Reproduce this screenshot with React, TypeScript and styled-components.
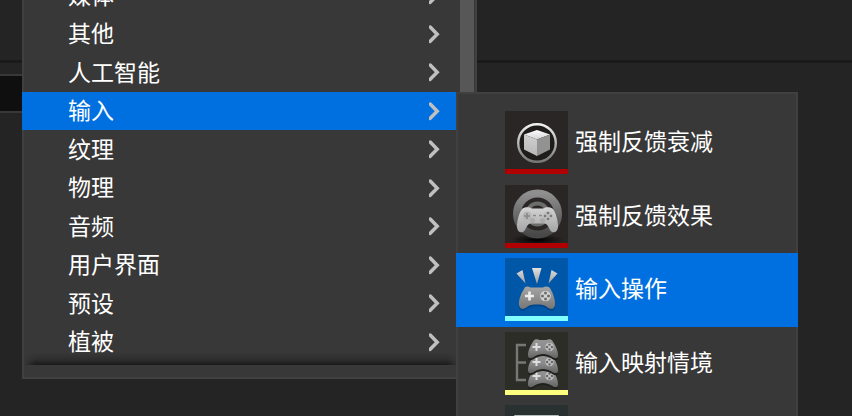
import React from "react";
import styled, { createGlobalStyle } from "styled-components";

const GlobalStyle = createGlobalStyle`
  * { box-sizing: border-box; }
  body { margin: 0; background: #242424; overflow: hidden; }
  button, input {
    font-family: "Noto Sans CJK SC", "Noto Sans", sans-serif;
    border: 0;
    padding: 0;
    margin: 0;
  }
`;

const Page = styled.main`
  position: relative;
  display: flex;
  flex-direction: column;
  align-items: flex-start;
  min-height: 100vh;
  overflow: hidden;
  background: #242424;
  color: #fff;
`;

const TopPane = styled.header`
  align-self: stretch;
  height: 63px;
  border-bottom: 3px solid #1a1a1a;
`;

const SearchBox = styled.input`
  width: 160px;
  height: 39px;
  margin-top: 11px;
  background: #0f0f0f;
  border: solid #383838;
  border-width: 2px 0;
  color: #c0c0c0;
`;

const Menu = styled.nav`
  position: absolute;
  top: -26px;
  left: 22px;
  width: 455px;
  background: #383838;
  border: 2px solid #404040;
`;

const MenuScroll = styled.div`
  display: flex;
  margin-left: -2px;
`;

const MenuList = styled.div`
  flex: 1;
  display: grid;
  grid-template-rows: repeat(10, 1fr);
  height: 385px;
  margin-bottom: 4px;
`;

const MenuRow = styled.button<{ $active?: boolean }>`
  display: flex;
  align-items: center;
  justify-content: space-between;
  padding: 0 17px 0 46px;
  background: ${(p) => (p.$active ? "#0070e0" : "transparent")};
  color: #fff;
  font-size: 23px;
  line-height: 34px;
  text-align: left;
`;

const MenuLabel = styled.span`
  padding-bottom: 3px;
`;

const ScrollTrack = styled.div`
  width: 17px;
  padding: 0 1px 0 2px;
`;

const ScrollThumb = styled.div`
  height: 240px;
  background: #575757;
`;

const MenuFooter = styled.div`
  position: relative;
  height: 12px;
  background: #383838;

  &::before {
    content: "";
    position: absolute;
    left: 0;
    right: 16px;
    bottom: 100%;
    height: 12px;
    background: linear-gradient(to bottom, rgba(26, 26, 26, 0), rgba(26, 26, 26, 0.35) 55%, #1a1a1a);
    mask-image: linear-gradient(to right, transparent, #000 12px, #000 calc(100% - 12px), transparent);
  }
`;

const Submenu = styled.nav`
  position: absolute;
  top: 92px;
  left: 456px;
  width: 342px;
  padding-top: 12px;
  background: #383838;
  border: 2px solid #404040;
`;

const AssetList = styled.div`
  display: grid;
  grid-template-rows: repeat(6, 1fr);
  height: 441px;
  margin: 0 -2px;
`;

const AssetRow = styled.button<{ $active?: boolean }>`
  display: flex;
  align-items: flex-start;
  gap: 7px;
  padding: 5px 0 0 49px;
  background: ${(p) => (p.$active ? "#0070e0" : "transparent")};
  color: #fff;
  font-size: 23px;
  line-height: 58px;
  text-align: left;
`;

const Thumb = styled.span<{ $fill: string; $bar: string }>`
  display: block;
  width: 63px;
  height: 63px;
  background: ${(p) => p.$fill};
  border-bottom: 5px solid ${(p) => p.$bar};

  svg { display: block; }
`;

const Chevron = () => (
  <svg width="12" height="20" viewBox="0 0 12 20" fill="none" aria-hidden="true">
    <path d="M1.2 3 L8.2 10.2 L1.2 17.4" stroke="#c0c0c0" strokeWidth="3.5" strokeLinecap="round" />
  </svg>
);

const Gradients = () => (
  <svg width="0" height="0" aria-hidden="true">
    <defs>
      <linearGradient id="pad" x1="0" y1="0" x2="0" y2="1">
        <stop offset="0" stopColor="#a5a5a5" />
        <stop offset="1" stopColor="#777" />
      </linearGradient>
      <linearGradient id="padDark" x1="0" y1="0" x2="0" y2="1">
        <stop offset="0" stopColor="#969696" />
        <stop offset="0.5" stopColor="#8a8a8a" />
        <stop offset="1" stopColor="#626262" />
      </linearGradient>
      <linearGradient id="ring" x1="0" y1="0" x2="0" y2="1">
        <stop offset="0" stopColor="#f2f2f2" />
        <stop offset="1" stopColor="#777" />
      </linearGradient>
      <linearGradient id="wheel" x1="0" y1="0" x2="0" y2="1">
        <stop offset="0" stopColor="#8f8f8f" />
        <stop offset="1" stopColor="#484848" />
      </linearGradient>
      <linearGradient id="whitePad" x1="0" y1="0" x2="0" y2="1">
        <stop offset="0" stopColor="#d4d4d4" />
        <stop offset="1" stopColor="#a4a4a4" />
      </linearGradient>
      <linearGradient id="ray" x1="0" y1="0" x2="0" y2="1">
        <stop offset="0" stopColor="#e2e2e2" />
        <stop offset="1" stopColor="#9d9d9d" />
      </linearGradient>
      <linearGradient id="cubeTop" x1="0" y1="0" x2="0" y2="1">
        <stop offset="0" stopColor="#fff" />
        <stop offset="1" stopColor="#d2d2d2" />
      </linearGradient>
      <linearGradient id="cubeSide" x1="0" y1="0" x2="0" y2="1">
        <stop offset="0" stopColor="#d0d0d0" />
        <stop offset="1" stopColor="#b8b8b8" />
      </linearGradient>
      <radialGradient id="floor">
        <stop offset="0" stopColor="#000" />
        <stop offset="1" stopColor="#000" stopOpacity="0" />
      </radialGradient>
    </defs>
  </svg>
);

const CubeIcon = () => (
  <svg width="63" height="58" viewBox="0 0 63 58" aria-hidden="true">
    <circle cx="32" cy="32" r="18.8" fill="#1f1c1c" stroke="url(#ring)" strokeWidth="2.4" />
    <path d="M19 23.5 L32 19 L45 23.5 L32 28.5 Z" fill="url(#cubeTop)" />
    <path d="M19 23.5 L32 28.5 V45 L19 38.5 Z" fill="url(#cubeSide)" />
    <path d="M45 23.5 L32 28.5 V45 L45 38.5 Z" fill="#929292" />
  </svg>
);

const WheelIcon = () => (
  <svg width="63" height="58" viewBox="0 0 63 58" aria-hidden="true">
    <ellipse cx="32" cy="55" rx="27" ry="6" fill="url(#floor)" />
    <circle cx="32.5" cy="29" r="20.5" fill="none" stroke="url(#wheel)" strokeWidth="8" />
    <circle cx="32.5" cy="29" r="10.5" fill="none" stroke="#6c6c6c" strokeWidth="4" />
    <path
      d="M17 24 C19 22 24 21.5 27 23.5 H38 C41 21.5 46 22 48 24 C51 28 53 36 53 41 C53 48 47.5 49 45 45 C43.5 42 42.5 39.5 40 38.5 H25 C22.5 39.5 21.5 42 20 45 C17.5 49 12 48 12 41 C12 36 14 28 17 24 Z"
      fill="url(#whitePad)"
    />
    <circle cx="22" cy="31" r="4.5" fill="#b5b5b5" />
    <path d="M22 28 V34 M19 31 H25" stroke="#888" strokeWidth="1.6" />
    <circle cx="43" cy="31" r="4.5" fill="#bcbcbc" />
    <g fill="#7a7a7a">
      <circle cx="43" cy="28" r="1.3" />
      <circle cx="43" cy="34" r="1.3" />
      <circle cx="40" cy="31" r="1.3" />
      <circle cx="46" cy="31" r="1.3" />
    </g>
    <path d="M28 30.5 H31 M34 30.5 H37" stroke="#8a8a8a" strokeWidth="1.6" />
    <circle cx="27.5" cy="35.5" r="2.6" fill="#aaa" />
    <circle cx="37.5" cy="35.5" r="2.6" fill="#aaa" />
  </svg>
);

const smallPad =
  "M6 2 C7 0 10 0 12 1 H19 C21 0 24 0 25 2 C28 6 31 13 30.5 17 C30 20 27 19.5 24 17.5 C19 14 12 14 7 17.5 C4 19.5 1 20 0.5 17 C0 13 3 6 6 2 Z";

const MappingPad = () => (
  <>
    <path d={smallPad} fill="#20201c" transform="translate(0 2)" />
    <path d={smallPad} fill="url(#padDark)" />
    <path d="M9 4 V12 M5 8 H13" stroke="#dedede" strokeWidth="2" />
    <circle cx="22" cy="8" r="4.2" fill="#c4c4c4" />
    <g fill="#666">
      <circle cx="22" cy="5.6" r="1.2" />
      <circle cx="22" cy="10.4" r="1.2" />
      <circle cx="19.6" cy="8" r="1.2" />
      <circle cx="24.4" cy="8" r="1.2" />
    </g>
  </>
);

const largePad =
  "M19 31 C20 28 23 28 25.5 29.5 H38 C40 28 44 28 45.5 31 C48.5 36 50.5 43 50 47 C49 52 45 51.5 42 49 C39.5 47 37 46.5 32 46.5 C27 46.5 24.5 47 22 49 C19 51.5 15 52 14 47 C13.5 43 15.5 36 19 31 Z";

const ActionIcon = () => (
  <svg width="63" height="58" viewBox="0 0 63 58" aria-hidden="true">
    <path d="M11.5 15.5 L17.5 12 L20.5 25.5 Z M27 10 H36.5 L32 26 Z M46.5 12 L52.5 15.5 L43.5 25.5 Z" fill="url(#ray)" />
    <path d={largePad} fill="#00356d" opacity=".5" transform="translate(0 2)" />
    <path d={largePad} fill="url(#pad)" />
    <path d="M24.5 33.5 V42.5 M20 38 H29" stroke="#eee" strokeWidth="2.6" />
    <circle cx="40.5" cy="38" r="5.3" fill="#d2d2d2" />
    <g fill="#6d6d6d">
      <circle cx="40.5" cy="35" r="1.5" />
      <circle cx="40.5" cy="41" r="1.5" />
      <circle cx="37.5" cy="38" r="1.5" />
      <circle cx="43.5" cy="38" r="1.5" />
    </g>
  </svg>
);

const MappingIcon = () => (
  <svg width="63" height="58" viewBox="0 0 63 58" aria-hidden="true">
    <path d="M21 13 H12 V48 H21 M12 30.5 H21" fill="none" stroke="#777774" strokeWidth="2.4" />
    {[36, 22, 7].map((y) => (
      <g key={y} transform={`translate(22.5 ${y})`}>
        <MappingPad />
      </g>
    ))}
  </svg>
);

const PanelIcon = () => (
  <svg width="63" height="58" viewBox="0 0 63 58" aria-hidden="true">
    <rect x="9" y="10" width="45" height="38" rx="1" fill="#b9bcbc" />
  </svg>
);

const categories = ["媒体", "其他", "人工智能", "输入", "纹理", "物理", "音频", "用户界面", "预设", "植被"];

const assets = [
  { label: "强制反馈衰减", fill: "#2b2626", bar: "#b00000", Icon: CubeIcon },
  { label: "强制反馈效果", fill: "#2b2626", bar: "#b00000", Icon: WheelIcon },
  { label: "输入操作", fill: "#0057a8", bar: "#7fffff", Icon: ActionIcon },
  { label: "输入映射情境", fill: "#2d2d28", bar: "#ffff7f", Icon: MappingIcon },
  { label: "", fill: "#293030", bar: "#7fffff", Icon: PanelIcon },
];

export default function App() {
  const selectedCategory = "输入";
  const selectedAsset = "输入操作";
  return (
    <Page>
      <GlobalStyle />
      <TopPane />
      <SearchBox type="text" aria-label="搜索" />
      <Gradients />
      <Menu role="menu">
        <MenuScroll>
          <MenuList>
            {categories.map((name) => (
              <MenuRow key={name} type="button" role="menuitem" $active={name === selectedCategory}>
                <MenuLabel>{name}</MenuLabel>
                <Chevron />
              </MenuRow>
            ))}
          </MenuList>
          <ScrollTrack>
            <ScrollThumb />
          </ScrollTrack>
        </MenuScroll>
        <MenuFooter />
      </Menu>
      <Submenu role="menu">
        <AssetList>
          {assets.map(({ label, fill, bar, Icon }) => (
            <AssetRow key={fill + label} type="button" role="menuitem" $active={label === selectedAsset}>
              <Thumb $fill={fill} $bar={bar}>
                <Icon />
              </Thumb>
              {label}
            </AssetRow>
          ))}
        </AssetList>
      </Submenu>
    </Page>
  );
}
